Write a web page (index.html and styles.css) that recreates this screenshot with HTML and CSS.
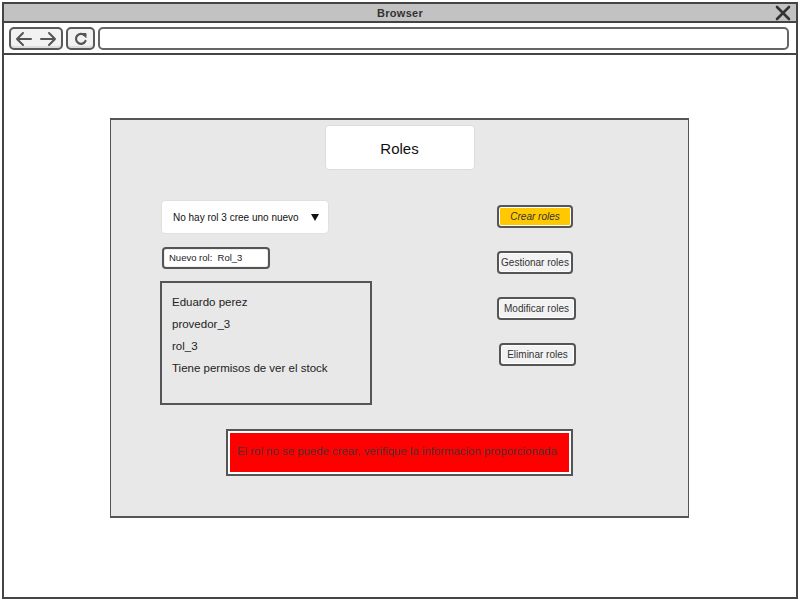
FILE: index.html
```html
<!DOCTYPE html>
<html lang="es">
<head>
<meta charset="utf-8">
<title>Roles</title>
<link rel="stylesheet" href="styles.css">
</head>
<body>
<div class="browser">
  <div class="titlebar">
    <span class="title">Browser</span>
    <svg class="close" width="16" height="16" viewBox="0 0 16 16"><path d="M2 2 L14 14 M14 2 L2 14" stroke="#333" stroke-width="2.6" stroke-linecap="round" fill="none"/></svg>
  </div>
  <div class="toolbar">
    <div class="tbtn nav">
      <svg width="44" height="16" viewBox="0 0 44 16"><path d="M3 8 H17 M3 8 L9 2 M3 8 L9 14" stroke="#555" stroke-width="2" fill="none" stroke-linecap="round"/><path d="M41 8 H27 M41 8 L35 2 M41 8 L35 14" stroke="#555" stroke-width="2" fill="none" stroke-linecap="round"/></svg>
    </div>
    <div class="tbtn reload">
      <svg width="16" height="16" viewBox="0 0 16 16"><path d="M11.5 4.2 A5 5 0 1 0 12.5 10" stroke="#555" stroke-width="2.2" fill="none" stroke-linecap="round"/><path d="M9 2.5 L13 2.5 L13 6.5 Z" fill="#555" stroke="#555" stroke-width="1"/></svg>
    </div>
    <div class="address"></div>
  </div>
  <div class="content">
    <div class="panel">
      <div class="title-card">Roles</div>
      <div class="main">
        <div class="left">
          <div class="dropdown"><span>No hay rol 3 cree uno nuevo</span><span class="caret"></span></div>
          <div class="field">Nuevo rol:&nbsp; Rol_3</div>
          <div class="list">
            <p>Eduardo perez</p>
            <p>provedor_3</p>
            <p>rol_3</p>
            <p>Tiene permisos de ver el stock</p>
          </div>
        </div>
        <div class="right">
          <div class="btn primary w76">Crear roles</div>
          <div class="btn w76">Gestionar roles</div>
          <div class="btn w79">Modificar roles</div>
          <div class="btn w77 shift">Eliminar roles</div>
        </div>
      </div>
      <div class="error"><div class="error-inner">El rol no se puede crear, verifique la informacion proporcionada</div></div>
    </div>
  </div>
</div>
</body>
</html>
```
FILE: styles.css
```css
* { box-sizing: border-box; }
html, body { margin: 0; padding: 0; background: #fff; }
body { font-family: "Liberation Sans", Arial, sans-serif; color: #222; }

.browser {
  margin: 2px;
  width: 796px;
  height: 597px;
  border: 2px solid #444;
  display: flex;
  flex-direction: column;
}
.titlebar {
  height: 19px;
  background: #c2c2c2;
  border-bottom: 2px solid #444;
  display: flex;
  align-items: center;
  justify-content: center;
  position: relative;
}
.title { font-size: 11px; font-weight: bold; color: #333; letter-spacing: 0.3px; }
.close { position: absolute; right: 5px; top: 1px; }

.toolbar {
  height: 32px;
  border-bottom: 2px solid #444;
  display: flex;
  align-items: flex-start;
  padding: 4px 0 0 5px;
  gap: 3px;
}
.tbtn {
  height: 23px;
  border: 2px solid #5a5a5a;
  border-radius: 5px;
  background: #f2f2f2;
  display: flex;
  align-items: center;
  justify-content: center;
  box-shadow: inset 0 -2px 0 #ddd;
}
.nav { width: 54px; }
.reload { width: 29px; }
.address {
  width: 691px;
  height: 23px;
  border: 2px solid #666;
  border-radius: 5px;
  background: #fff;
}

.content { flex: 1; padding: 63px 0 0 106px; }

.panel {
  width: 579px;
  height: 400px;
  background: #e8e8e8;
  border: 1px solid #555;
  border-top-width: 2px;
  border-bottom-width: 2px;
}
.title-card {
  width: 150px;
  height: 45px;
  margin: 5px auto 0;
  background: #fff;
  border: 1px solid #dcdcdc;
  border-radius: 4px;
  text-align: center;
  line-height: 45px;
  font-size: 15px;
  color: #111;
}
.main { display: flex; margin-top: 30px; }
.left { margin-left: 49px; width: 212px; display: flex; flex-direction: column; align-items: flex-start; }
.dropdown {
  margin-left: 1px;
  width: 168px;
  height: 34px;
  background: #fff;
  border: 1px solid #e0e0e0;
  border-radius: 4px;
  display: flex;
  align-items: center;
  padding-left: 11px;
  font-size: 10px;
  color: #111;
}
.caret {
  margin-left: 12px;
  width: 0; height: 0;
  border-left: 4.5px solid transparent;
  border-right: 4.5px solid transparent;
  border-top: 7px solid #111;
}
.field {
  margin: 13px 0 0 2px;
  width: 108px;
  height: 22px;
  border: 2px solid #555;
  border-radius: 4px;
  background: #fff;
  box-shadow: inset 0 0 0 1px #eee;
  font-size: 9.5px;
  line-height: 18px;
  padding-left: 5px;
  color: #222;
}
.list {
  margin-top: 12px;
  width: 212px;
  height: 124px;
  border: 2px solid #555;
  padding: 12px 0 0 10px;
}
.list p { margin: 0 0 8px; font-size: 11.5px; line-height: 14px; color: #222; }

.right { margin-left: 125px; margin-top: 5px; display: flex; flex-direction: column; gap: 23px; }
.btn {
  height: 23px;
  border: 2px solid #555;
  border-radius: 4px;
  background: #f2f2f2;
  box-shadow: inset 0 0 0 1px #fff;
  font-size: 10px;
  color: #333;
  display: flex;
  align-items: center;
  justify-content: center;
  white-space: nowrap;
}
.btn.primary { background: #ffc800; font-style: italic; }
.w76 { width: 76px; }
.w77 { width: 77px; }
.w79 { width: 79px; }
.shift { margin-left: 2px; }

.error {
  margin: 24px 0 0 115px;
  width: 347px;
  height: 47px;
  border: 2px solid #555;
  background: #fff;
  padding: 2px;
}
.error-inner {
  height: 100%;
  background: #ff0000;
  color: #4d3030;
  font-size: 11.4px;
  display: flex;
  align-items: center;
  padding: 0 0 3px 7px;
  white-space: nowrap;
}
```
